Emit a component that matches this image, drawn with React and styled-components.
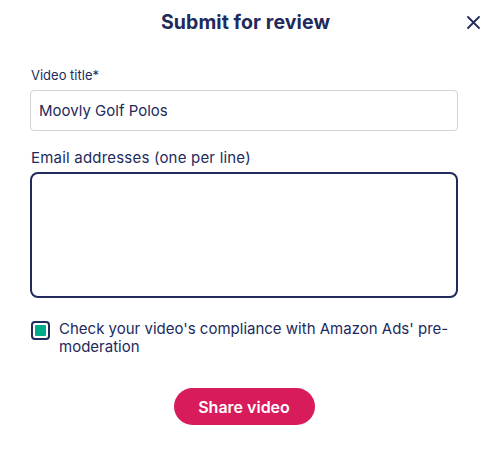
import React, { useState } from 'react'
import styled, { createGlobalStyle } from 'styled-components'

const GlobalStyle = createGlobalStyle`
  body {
    margin: 0;
    background: #fff;
    font-family: Inter, "Noto Sans", sans-serif;
    color: #222a5c;
  }
`

const Dialog = styled.div`
  width: 491px;
  height: 462px;
  box-sizing: border-box;
  padding: 10px 33px 0 30px;
  position: relative;
`

const Header = styled.div`
  display: flex;
  justify-content: center;
  align-items: center;
  height: 24px;
  margin-left: 3px;
`

const Title = styled.h2`
  margin: 0;
  font-size: 19.5px;
  font-weight: 700;
  letter-spacing: 0.1px;
`

const CloseButton = styled.button`
  position: absolute;
  top: 14px;
  right: 10px;
  width: 16px;
  height: 16px;
  padding: 0;
  border: none;
  background: none;
  color: #222a5c;
  cursor: pointer;
  display: flex;
  align-items: center;
  justify-content: center;
`

const Field = styled.div`
  display: flex;
  flex-direction: column;
  margin-top: ${(p) => p.top}px;
`

const Label = styled.label`
  font-size: ${(p) => (p.small ? 13 : 15)}px;
  letter-spacing: ${(p) => (p.small ? 0 : 0.2)}px;
  line-height: 18px;
  margin: 0 0 ${(p) => (p.small ? 6 : 5)}px 1px;
`

const TextInput = styled.input`
  height: 41px;
  box-sizing: border-box;
  border: 1px solid #d4d4d8;
  border-radius: 4px;
  padding: 0 8px;
  font: inherit;
  font-size: 15px;
  color: #222a5c;
  outline: none;
`

const TextArea = styled.textarea`
  height: 126px;
  box-sizing: border-box;
  border: 2px solid #222a5c;
  border-radius: 8px;
  padding: 8px;
  font: inherit;
  font-size: 15px;
  resize: none;
  outline: none;
`

const CheckRow = styled.label`
  display: flex;
  align-items: flex-start;
  gap: 9px;
  margin-top: 22px;
  margin-left: 1px;
  cursor: pointer;
`

const Box = styled.span`
  flex: none;
  width: 19px;
  height: 19px;
  box-sizing: border-box;
  border: 2px solid #222a5c;
  border-radius: 4px;
  padding: 2px;
  margin-top: 1px;
  display: flex;
`

const BoxFill = styled.span`
  flex: 1;
  border-radius: 1px;
  background: ${(p) => (p.checked ? '#00ab8a' : 'transparent')};
`

const CheckText = styled.span`
  font-size: 15px;
  line-height: 18px;
  letter-spacing: 0px;
`

const Actions = styled.div`
  display: flex;
  justify-content: center;
  margin-top: 32px;
`

const ShareButton = styled.button`
  width: 141px;
  height: 37px;
  border: none;
  border-radius: 19px;
  background: #d81b5a;
  color: #fff;
  font: inherit;
  font-size: 16px;
  font-weight: 600;
  cursor: pointer;
`

export default function App() {
  const [title, setTitle] = useState('Moovly Golf Polos')
  const [checked, setChecked] = useState(true)

  return (
    <>
      <GlobalStyle />
      <Dialog>
        <Header>
          <Title>Submit for review</Title>
        </Header>
        <CloseButton aria-label="Close">
          <svg width="13" height="13" viewBox="0 0 13 13">
            <path d="M1 1L12 12M12 1L1 12" stroke="currentColor" strokeWidth="1.8" strokeLinecap="round" />
          </svg>
        </CloseButton>

        <Field top={32}>
          <Label small htmlFor="title">Video title*</Label>
          <TextInput id="title" value={title} onChange={(e) => setTitle(e.target.value)} />
        </Field>

        <Field top={18}>
          <Label htmlFor="emails">Email addresses (one per line)</Label>
          <TextArea id="emails" />
        </Field>

        <CheckRow onClick={() => setChecked(!checked)}>
          <Box>
            <BoxFill checked={checked} />
          </Box>
          <CheckText>Check your video's compliance with Amazon Ads' pre-moderation</CheckText>
        </CheckRow>

        <Actions>
          <ShareButton>Share video</ShareButton>
        </Actions>
      </Dialog>
    </>
  )
}
